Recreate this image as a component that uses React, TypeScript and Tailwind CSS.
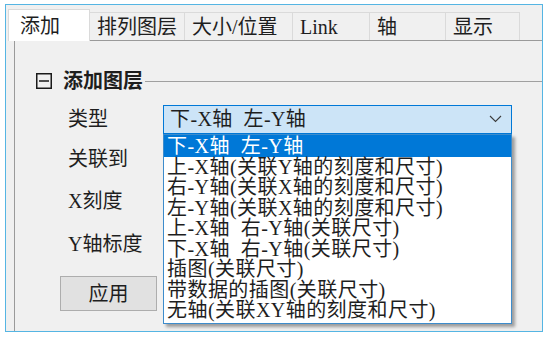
import React from 'react'

const tabs = [
  { label: '排列图层', w: 'w-[95px]' },
  { label: '大小/位置', w: 'w-[108px]' },
  { label: 'Link', w: 'w-[77px]' },
  { label: '轴', w: 'w-[76px]' },
  { label: '显示', w: 'w-[74px]' },
]

const options = [
  '下-X轴  左-Y轴',
  '上-X轴(关联Y轴的刻度和尺寸)',
  '右-Y轴(关联X轴的刻度和尺寸)',
  '左-Y轴(关联X轴的刻度和尺寸)',
  '上-X轴  右-Y轴(关联尺寸)',
  '下-X轴  右-Y轴(关联尺寸)',
  '插图(关联尺寸)',
  '带数据的插图(关联尺寸)',
  '无轴(关联XY轴的刻度和尺寸)',
]

function TypeSelect() {
  return (
    <div className="relative">
      <div className="w-[349px] h-[29px] border border-[#0078d7] bg-[#cce4f7] flex items-center justify-between pl-[6px] pr-[9px]">
        <span className="whitespace-pre leading-none tracking-[0.4px]">{options[0]}</span>
        <svg width="13" height="8" viewBox="0 0 13 8">
          <polyline points="1,1 6.5,6.5 12,1" fill="none" stroke="#3c3c3c" strokeWidth="1.1" />
        </svg>
      </div>
      <ul className="absolute left-0 top-full z-20 w-[349px] bg-white border border-[#3d8ccc] pb-[2px] tracking-[0.45px] shadow-[3px_3px_3px_rgba(0,0,0,0.35)]">
        {options.map((opt, i) => (
          <li
            key={opt}
            className={
              i === 0
                ? 'h-[22px] leading-[22px] pl-[3px] bg-[#0078d7] text-white whitespace-pre'
                : 'h-[20.5px] leading-[20.5px] pl-[3px] whitespace-pre'
            }
          >
            {opt}
          </li>
        ))}
      </ul>
    </div>
  )
}

export default function App() {
  return (
    <div className="w-[549px] h-[339px] bg-white pt-[4px] pl-[5px] font-['Liberation_Serif','Noto_Sans_CJK_SC',serif] text-[20px] text-[#1e1e1e]">
      <div className="w-[538px] h-[328px] border border-[#55b5e3] bg-[#f0f0f0] flex flex-col">
        {/* tab strip */}
        <div className="flex items-end pt-[4px] pl-[2px]">
          <div className="relative z-10 -mb-[1px] w-[82px] h-[32px] bg-white border border-b-0 border-[#dadada] pl-[11px] flex items-center">
            添加
          </div>
          {tabs.map((t) => (
            <div
              key={t.label}
              className={`${t.w} h-[28px] border-t border-r border-[#dadada] pl-[7px] flex items-center whitespace-nowrap`}
            >
              {t.label}
            </div>
          ))}
        </div>

        {/* panel */}
        <div className="flex-1 ml-[8px] border-l border-t border-[#9a9a9a] flex flex-col">
          <div className="mt-[29px] h-[22px] flex items-center pl-[21px]">
            <svg width="16" height="16" viewBox="0 0 16 16">
              <rect x="0.75" y="0.75" width="14.5" height="14.5" fill="none" stroke="#1a1a1a" strokeWidth="1.5" />
              <line x1="3" y1="8" x2="13" y2="8" stroke="#1a1a1a" strokeWidth="1.5" />
            </svg>
            <span className="ml-[11px] font-bold leading-none">添加图层</span>
            <div className="flex-1 h-px bg-[#a0a0a0] ml-[2px]" />
          </div>

          <div className="pl-[53px] flex flex-col">
            <div className="mt-[12px] flex items-center">
              <span className="w-[95px]">类型</span>
              <TypeSelect />
            </div>
            <div className="mt-[10px] h-[30px] flex items-center">关联到</div>
            <div className="mt-[12px] h-[30px] flex items-center">X刻度</div>
            <div className="mt-[13px] h-[30px] flex items-center">Y轴标度</div>
            <button className="mt-[17px] -ml-[8px] w-[97px] h-[35px] bg-[#e1e1e1] border border-[#adadad] flex items-center justify-center">
              应用
            </button>
          </div>
        </div>
      </div>
    </div>
  )
}
